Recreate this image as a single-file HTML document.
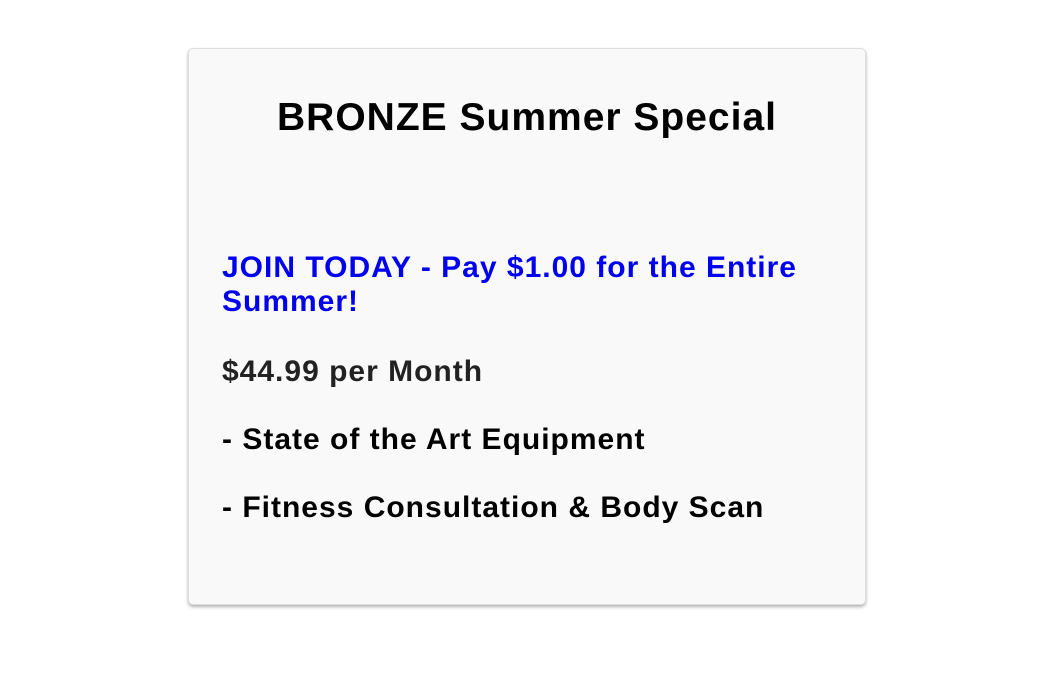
<!DOCTYPE html>
<html><head><style>
html,body{margin:0;padding:0;background:#fff;width:1060px;height:696px;overflow:hidden;font-family:"Liberation Sans",Arial,sans-serif}
.card{position:absolute;left:188px;top:48px;width:676px;height:555px;background:#f9f9f9;border:1px solid #ddd;border-radius:5px;box-shadow:0 2px 3px rgba(0,0,0,0.3)}
.t{position:absolute;left:0;width:100%;text-align:center;top:47px;font-size:39px;line-height:44px;font-weight:bold;color:#000;letter-spacing:1px}
.p{position:absolute;left:33px;width:620px;font-size:30px;line-height:34px;font-weight:bold;letter-spacing:1px}
</style></head><body>
<div class="card">
<div class="t">BRONZE Summer Special</div>
<div class="p" style="top:202px;color:#0000ee">JOIN TODAY - Pay $1.00 for the Entire Summer!</div>
<div class="p" style="top:306px;color:#222">$44.99 per Month</div>
<div class="p" style="top:374px;color:#000">- State of the Art Equipment</div>
<div class="p" style="top:442px;color:#000">- Fitness Consultation &amp; Body Scan</div>
</div>
</body></html>
